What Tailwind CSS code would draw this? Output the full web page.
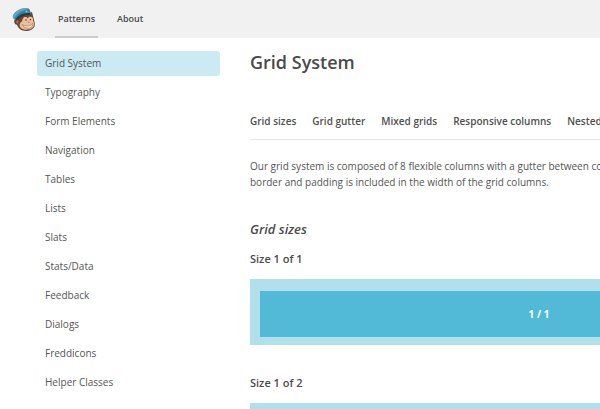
<!DOCTYPE html>
<html lang="en">
<head>
    <meta charset="UTF-8">
    <meta name="viewport" content="width=device-width, initial-scale=1.0">
    <title>Grid System | Patterns</title>
    <script src="https://cdn.jsdelivr.net/npm/@tailwindcss/browser@4"></script>
</head>
<body class="h-screen overflow-hidden bg-white font-['Open_Sans',sans-serif] text-[10px] text-[#555]">
    <header class="flex h-[38px] bg-[#f1f1f1] pl-3">
        <a href="#" aria-label="Home" class="mr-[19px] pt-[7px]">
            <svg class="h-6 w-6" viewBox="0 0 24 24">
                <!-- head -->
                <path d="M5 12C3.500 11.500 2.200 12.500 2.200 14.500S3.500 18 5 17.800c1 3.700 4.500 6.200 9 6.200 5 0 8.500-2.500 8.800-6.500.2-2-.6-3-.8-4.500L20 5 8 9z" fill="#6b4634"/>
                <path d="M4.500 13.800c.8-1 2-.2 2 1s-.6 2-1.400 1.700-1.200-1.700-.6-2.700z" fill="#a8705a"/>
                <!-- face -->
                <path d="M11 11.500c1.500-2 3.700-1.700 4.500-.3 1-1.900 4.200-2.200 5.200-.2.500 1 .2 2.300.7 3.500 1.600 2.700.6 7.600-5.500 8.100-5.500.4-8.700-2.200-8.200-5.200.3-2 1.800-2.300 2.400-3.400.4-.8.400-1.700.9-2.500z" fill="#eebd9a"/>
                <path d="M10.200 17.300c2.700 2.400 7.500 2.500 10.800-.9-.2 3.700-3.100 4.900-5.600 4.700-2.600-.1-4.700-1.400-5.200-3.800z" fill="#fbe9d8" stroke="#9a6a52" stroke-width=".6"/>
                <path d="M16 15.300l1.700-.1" stroke="#8a5a45" stroke-width=".7"/>
                <circle cx="14" cy="13" r=".7" fill="#382b28"/>
                <circle cx="18.400" cy="12.600" r=".7" fill="#382b28"/>
                <!-- cap -->
                <path d="M.8 9.500C1.500 5.500 7 1.800 13 1c2.500-.3 5 .8 5.300 3.200l.5 3.800C12.500 7 8 9 4 13 2.200 12.700.6 11.200.8 9.500z" fill="#3784a2"/>
                <path d="M.8 9.500C1.500 5.500 7 1.800 13 1c1.600-.2 3 .2 4 1C10 3 5 6 2.200 11.800 1.300 11.200.6 10.500.8 9.500z" fill="#5eaac4"/>
                <path d="M3.500 12.800C5.500 8.500 10 5.500 18 6l.6 2C13 7.600 8.500 9.600 4.500 13.500z" fill="#223c4a"/>
                <circle cx="14.500" cy="4.600" r="1" fill="#9fc0c8"/>
            </svg>
        </a>
        <nav class="flex gap-4 text-[9px] font-semibold text-[#4a4a4a]">
            <a href="#" class="flex items-center border-b-2 border-[#cdcdcd] px-[3px] pt-px">Patterns</a>
            <a href="#" class="flex items-center border-b-2 border-transparent px-[3px] pt-px">About</a>
        </nav>
    </header>

    <div class="flex">
        <aside class="ml-[37px] w-[183px] shrink-0 pt-[13px]">
            <nav class="flex flex-col gap-1 leading-[25px]">
                <a href="#" class="rounded-[3px] bg-[#cbeaf1] px-2">Grid System</a>
                <a href="#" class="px-2">Typography</a>
                <a href="#" class="px-2">Form Elements</a>
                <a href="#" class="px-2">Navigation</a>
                <a href="#" class="px-2">Tables</a>
                <a href="#" class="px-2">Lists</a>
                <a href="#" class="px-2">Slats</a>
                <a href="#" class="px-2">Stats/Data</a>
                <a href="#" class="px-2">Feedback</a>
                <a href="#" class="px-2">Dialogs</a>
                <a href="#" class="px-2">Freddicons</a>
                <a href="#" class="px-2">Helper Classes</a>
            </nav>
        </aside>

        <main class="ml-[30px] min-w-[578px] flex-1 pt-3">
            <h1 class="text-[18px] leading-6 font-semibold text-[#4a4a4a]">Grid System</h1>

            <nav class="mt-9 flex gap-4 border-b border-[#e8e8e8] pt-px pb-2 leading-5 font-semibold whitespace-nowrap text-[#4f4f4f]">
                <a href="#">Grid sizes</a>
                <a href="#">Grid gutter</a>
                <a href="#">Mixed grids</a>
                <a href="#">Responsive columns</a>
                <a href="#">Nested grids</a>
            </nav>

            <p class="mt-[18px] leading-4">
                Our grid system is composed of 8 flexible columns with a gutter between columns. The<br>
                border and padding is included in the width of the grid columns.
            </p>

            <h2 class="mt-[29px] text-[13px] leading-5 font-semibold text-[#4a4a4a] italic">Grid sizes</h2>

            <h3 class="mt-3 text-[11px] leading-4 font-semibold text-[#4a4a4a]">Size 1 of 1</h3>
            <div class="mt-3 bg-[#b1dfeb] px-[10px] pt-3 pb-2">
                <div class="bg-[#52b9d7] text-center leading-[46px] font-bold text-white">1 / 1</div>
            </div>

            <h3 class="mt-[30px] text-[11px] leading-4 font-semibold text-[#4a4a4a]">Size 1 of 2</h3>
            <div class="mt-3 grid grid-cols-2 gap-[10px] bg-[#b1dfeb] px-[10px] pt-3 pb-2">
                <div class="bg-[#52b9d7] text-center leading-[46px] font-bold text-white">1 / 2</div>
                <div class="bg-[#52b9d7] text-center leading-[46px] font-bold text-white">1 / 2</div>
            </div>
        </main>
    </div>
</body>
</html>
